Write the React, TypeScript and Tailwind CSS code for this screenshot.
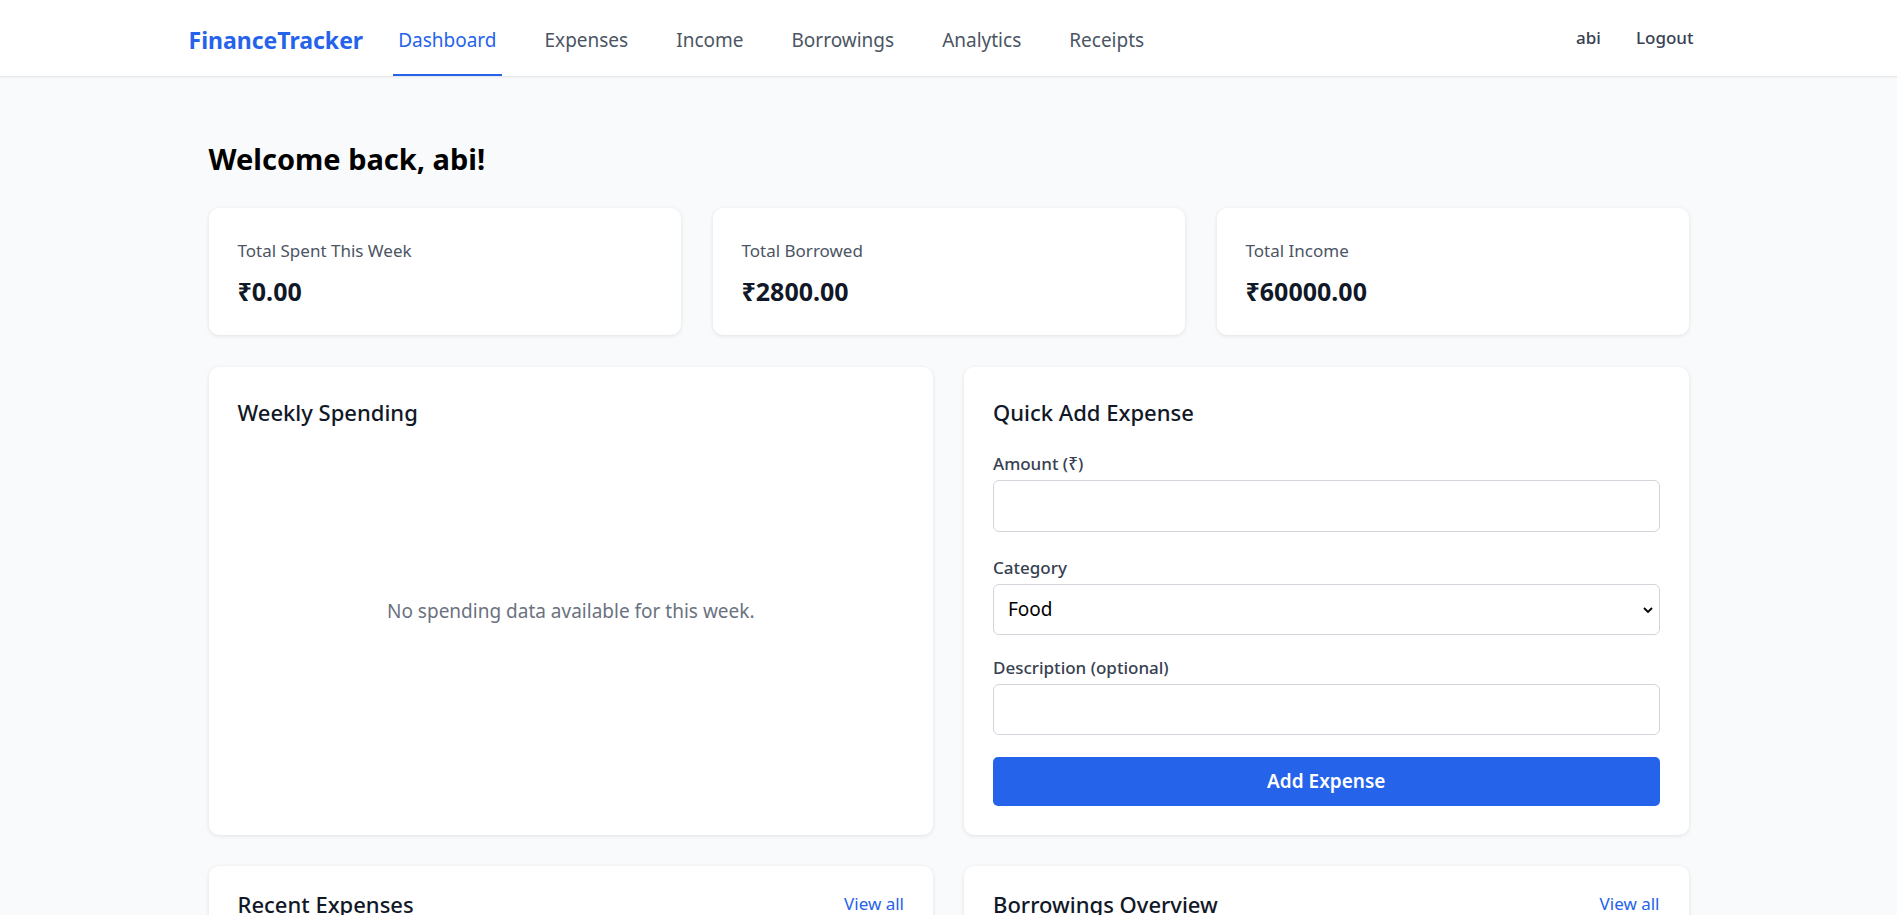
import React from "react";

const font = { fontFamily: '"Noto Sans", "Open Sans", sans-serif' };

function StatCard({ label, value }: { label: string; value: string }) {
  return (
    <div className="flex-1 rounded-[10px] bg-white px-[29px] pt-[31px] pb-[28px] shadow-[0_1px_4px_rgba(0,0,0,0.1)]">
      <div className="text-[17px] leading-[24px] text-[#4b5563]">{label}</div>
      <div className="mt-[12px] text-[25px] font-bold leading-[32px] text-[#111827]">{value}</div>
    </div>
  );
}

function ListCard({ title }: { title: string }) {
  return (
    <div className="h-[200px] rounded-[10px] bg-white px-[29px] pt-[22px] shadow-[0_1px_4px_rgba(0,0,0,0.1)]">
      <div className="flex items-center justify-between">
        <h2 className="text-[22px] font-medium leading-[32px] text-[#111827]">{title}</h2>
        <a className="text-[17px] text-[#2563eb]">View all</a>
      </div>
    </div>
  );
}

export default function App() {
  const links = ["Dashboard", "Expenses", "Income", "Borrowings", "Analytics", "Receipts"];
  return (
    <div className="min-h-screen bg-[#f9fafb]" style={font}>
      <nav className="h-[77px] border-b border-[#e5e7eb] bg-white shadow-[0_1px_2px_rgba(0,0,0,0.04)]">
        <div className="mx-auto flex h-full w-[1520px] items-center justify-between">
          <div className="flex h-full items-center">
            <span className="pt-[4px] text-[23px] font-bold text-[#2563eb]">FinanceTracker</span>
            <div className="ml-[30px] flex h-full gap-[38px]">
              {links.map((l, i) => (
                <a
                  key={l}
                  className={
                    i === 0
                      ? "flex h-full items-center border-b-[2px] border-[#2563eb] px-[5px] pt-[6px] text-[19px] text-[#2563eb]"
                      : "flex h-full items-center border-b-[2px] border-transparent px-[5px] pt-[6px] text-[19px] text-[#4b5563]"
                  }
                >
                  {l}
                </a>
              ))}
            </div>
          </div>
          <div className="flex items-center gap-[35px] pr-[15px] text-[17px] font-medium text-[#374151]">
            <span>abi</span>
            <span>Logout</span>
          </div>
        </div>
      </nav>

      <main className="mx-auto w-[1480px] pt-[62px]">
        <h1 className="text-[29px] font-bold leading-[40px] text-black">Welcome back, abi!</h1>

        <div className="mt-[29px] flex gap-[32px]">
          <StatCard label="Total Spent This Week" value="₹0.00" />
          <StatCard label="Total Borrowed" value="₹2800.00" />
          <StatCard label="Total Income" value="₹60000.00" />
        </div>

        <div className="mt-[32px] grid grid-cols-2 gap-[31px]">
          <div className="flex h-[468px] flex-col rounded-[10px] bg-white p-[29px] shadow-[0_1px_4px_rgba(0,0,0,0.1)]">
            <h2 className="text-[22px] font-medium leading-[32px] text-[#111827]">Weekly Spending</h2>
            <div className="flex flex-1 items-center justify-center pb-[12px] text-[19px] text-[#6b7280]">
              No spending data available for this week.
            </div>
          </div>

          <div className="h-[468px] rounded-[10px] bg-white p-[29px] shadow-[0_1px_4px_rgba(0,0,0,0.1)]">
            <h2 className="text-[22px] font-medium leading-[32px] text-[#111827]">Quick Add Expense</h2>
            <div className="mt-[24px]">
              <label className="block text-[17px] font-medium leading-[24px] text-[#374151]">Amount (₹)</label>
              <input className="mt-[4px] block h-[52px] w-full rounded-[6px] border border-[#d1d5db] bg-white px-[14px] text-[19px]" />
            </div>
            <div className="mt-[24px]">
              <label className="block text-[17px] font-medium leading-[24px] text-[#374151]">Category</label>
              <div className="relative mt-[4px] flex h-[51px] w-full items-center rounded-[6px] border border-[#d1d5db] bg-white px-[14px] text-[19px] text-black">
                <span>Food</span>
                <svg className="absolute right-[5px] top-[19px]" width="12" height="12" viewBox="0 0 12 12">
                  <path d="M2 4 L6 8 L10 4" fill="none" stroke="#000" strokeWidth="1.8" />
                </svg>
              </div>
            </div>
            <div className="mt-[21px]">
              <label className="block text-[17px] font-medium leading-[24px] text-[#374151]">Description (optional)</label>
              <input className="mt-[4px] block h-[51px] w-full rounded-[6px] border border-[#d1d5db] bg-white px-[14px] text-[19px]" />
            </div>
            <button className="mt-[22px] h-[49px] w-full rounded-[5px] bg-[#2563eb] text-[19px] font-semibold text-white">
              Add Expense
            </button>
          </div>
        </div>

        <div className="mt-[31px] grid grid-cols-2 gap-[31px]">
          <ListCard title="Recent Expenses" />
          <ListCard title="Borrowings Overview" />
        </div>
      </main>
    </div>
  );
}
